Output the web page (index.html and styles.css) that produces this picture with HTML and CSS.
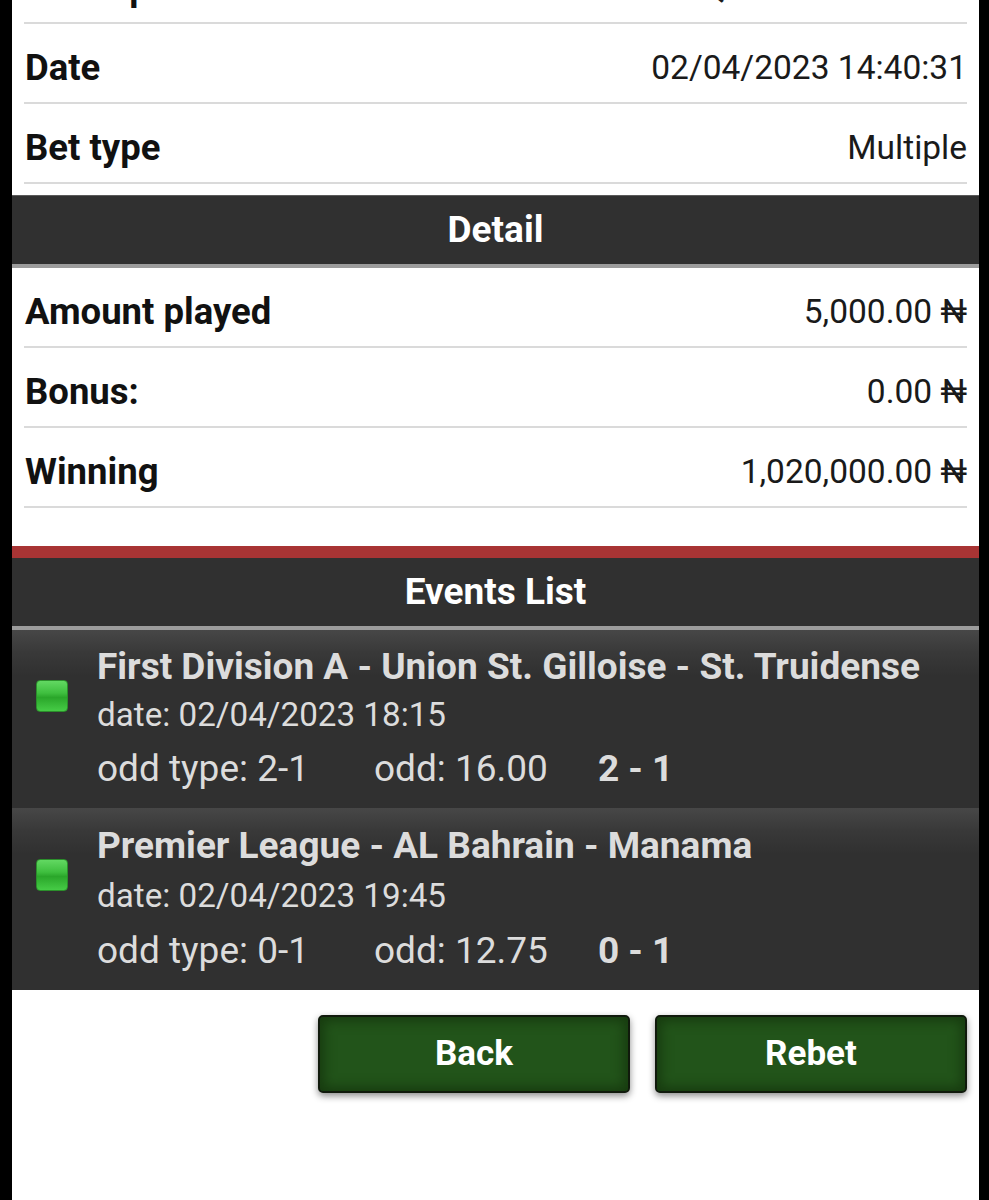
FILE: index.html
```html
<!DOCTYPE html>
<html>
<head>
<meta charset="utf-8">
<link rel="stylesheet" href="styles.css">
</head>
<body>
<div class="page">
  <div class="scroll">
    <div class="rows">
      <div class="row"><span class="label">Description</span><span class="value">Q48TKM2NX7WR</span></div>
      <div class="row"><span class="label">Date</span><span class="value">02/04/2023 14:40:31</span></div>
      <div class="row"><span class="label">Bet type</span><span class="value">Multiple</span></div>
    </div>
    <div class="header detail-header">Detail</div>
    <div class="rows">
      <div class="row"><span class="label">Amount played</span><span class="value">5,000.00 ₦</span></div>
      <div class="row"><span class="label">Bonus:</span><span class="value">0.00 ₦</span></div>
      <div class="row"><span class="label">Winning</span><span class="value">1,020,000.00 ₦</span></div>
    </div>
    <div class="header events-header">Events List</div>
    <div class="events">
      <div class="event">
        <span class="status"></span>
        <div class="event-body">
          <div class="event-title">First Division A - Union St. Gilloise - St. Truidense</div>
          <div class="event-date">date: 02/04/2023 18:15</div>
          <div class="event-odds"><span class="odd-type">odd type: 2-1</span><span class="odd">odd: 16.00</span><span class="score">2 - 1</span></div>
        </div>
      </div>
      <div class="event event-second">
        <span class="status"></span>
        <div class="event-body">
          <div class="event-title">Premier League - AL Bahrain - Manama</div>
          <div class="event-date">date: 02/04/2023 19:45</div>
          <div class="event-odds"><span class="odd-type">odd type: 0-1</span><span class="odd">odd: 12.75</span><span class="score">0 - 1</span></div>
        </div>
      </div>
    </div>
    <div class="actions">
      <button class="btn">Back</button>
      <button class="btn">Rebet</button>
    </div>
  </div>
</div>
</body>
</html>
```

FILE: styles.css
```css
* { box-sizing: border-box; }
html, body { margin: 0; padding: 0; }
body {
  background: #000;
  font-family: Roboto, "Liberation Sans", sans-serif;
  overflow: hidden;
}
.page {
  margin-left: 12px;
  width: 967px;
  height: 1200px;
  background: #fff;
  overflow: hidden;
}
.scroll {
  margin-top: -56px;
}
.rows {
  padding: 0 12px;
}
.row {
  height: 80px;
  padding: 8px 0 0 1px;
  border-bottom: 2px solid #dadada;
  display: flex;
  align-items: center;
  justify-content: space-between;
  color: #111;
}
.label {
  font-weight: 700;
  font-size: 36.5px;
}
.value {
  font-size: 33.5px;
  color: #1a1a1a;
}
.header {
  background: #303030;
  color: #fff;
  font-weight: 700;
  font-size: 37px;
  text-align: center;
  height: 72px;
  line-height: 68px;
  border-bottom: 4px solid #9c9c9c;
}
.detail-header {
  margin-top: 11px;
  border-top: 1px solid #5a5a5a;
  height: 73px;
  line-height: 67px;
}
.events-header {
  margin-top: 38px;
  border-top: 12px solid #a83434;
  height: 84px;
}
.events {
  background: #303030;
}
.event {
  height: 178px;
  padding: 13px 12px 0 24px;
  display: flex;
  align-items: flex-start;
  background: linear-gradient(#474747 0, #393939 22px, #303030 46px, #303030 100%);
  color: #dcdcdc;
}
.event-second {
  height: 182px;
  padding-top: 14px;
}
.event-second .event-date { line-height: 51px; }
.status {
  flex: none;
  width: 32px;
  height: 32px;
  margin-top: 37px;
  margin-right: 29px;
  border-radius: 4px;
  border: 1px solid #2b8f2b;
  background: linear-gradient(#62d862 0%, #3fbf3f 40%, #2aa62a 55%, #46cc46 100%);
}
.event-title {
  font-weight: 700;
  font-size: 37px;
  line-height: 48px;
  white-space: nowrap;
}
.event-date {
  font-size: 33.2px;
  line-height: 48px;
}
.event-odds {
  font-size: 37px;
  line-height: 60px;
  display: flex;
}
.odd-type { margin-right: 65px; }
.odd { margin-right: 50px; }
.score { font-weight: 700; }
.actions {
  display: flex;
  justify-content: flex-end;
  gap: 25px;
  padding: 25px 12px 0 0;
}
.btn {
  width: 312px;
  height: 78px;
  border: 2px solid #101a0c;
  border-radius: 5px;
  background: #22541a;
  box-shadow: inset 0 0 12px 4px #173b0f, 0 3px 7px rgba(0,0,0,0.45);
  color: #fff;
  font-family: Roboto, "Liberation Sans", sans-serif;
  font-weight: 700;
  font-size: 35px;
  padding: 0 0 2px;
}
```
